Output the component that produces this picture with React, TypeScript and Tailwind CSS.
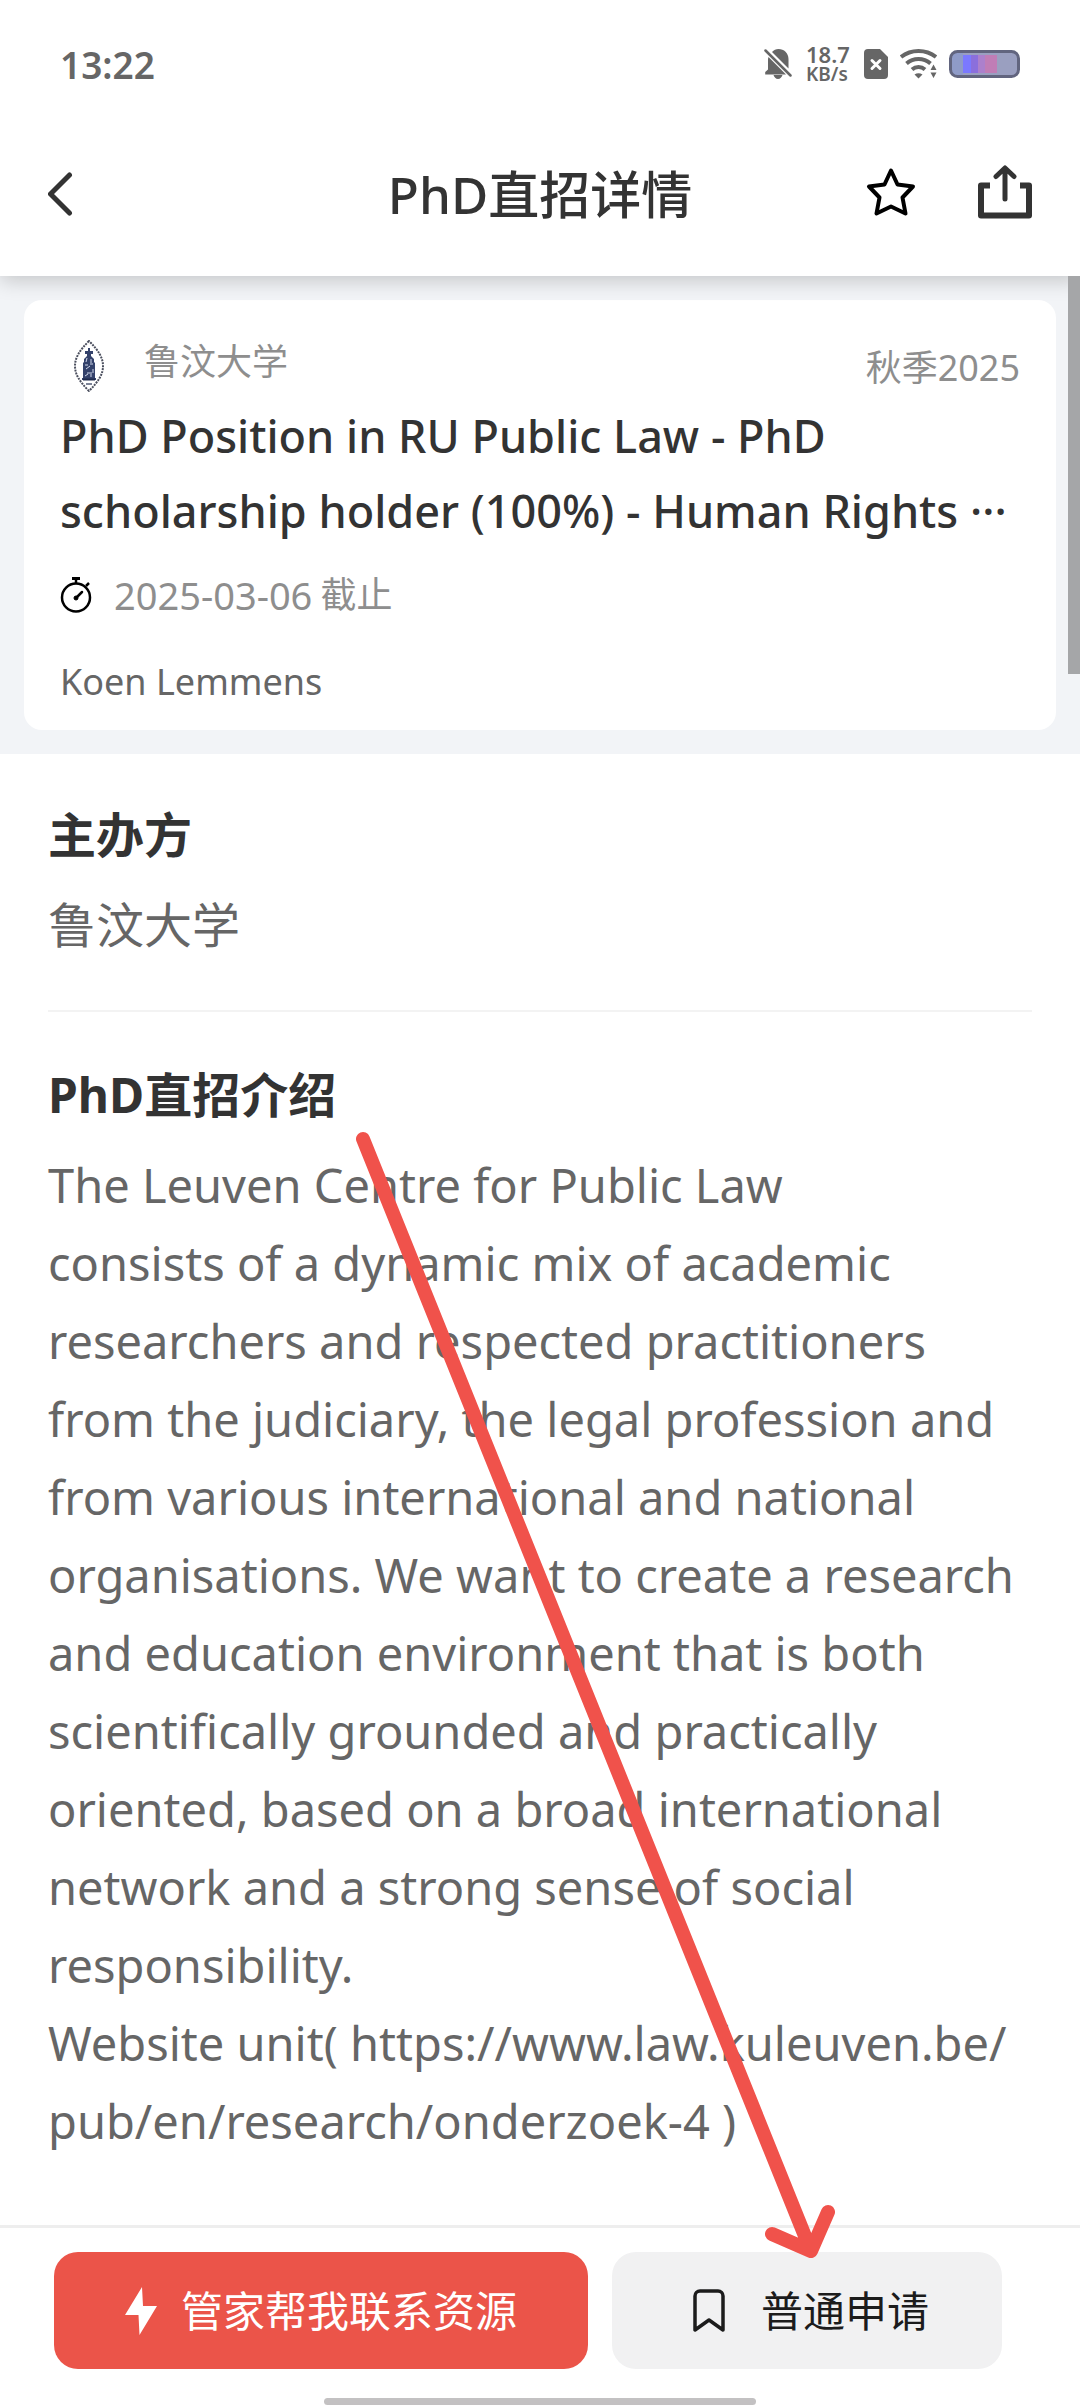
import type { ReactNode } from 'react';

const bodyLines = [
  'The Leuven Centre for Public Law',
  'consists of a dynamic mix of academic',
  'researchers and respected practitioners',
  'from the judiciary, the legal profession and',
  'from various international and national',
  'organisations. We want to create a research',
  'and education environment that is both',
  'scientifically grounded and practically',
  'oriented, based on a broad international',
  'network and a strong sense of social',
  'responsibility.',
];

function StatusBar() {
  return (
    <div className="flex h-32 items-center justify-between px-[60px] text-[#666]">
      <span className="text-[37px] leading-none font-semibold">13:22</span>
      <div className="flex items-center">
        {/* Muted bell */}
        <svg width="28" height="32" viewBox="0 0 28 32" className="mr-3.5" fill="currentColor">
          <path d="M8 4C9.800 2 12 1 14.500 1 20 1 24.500 5 24.500 11v9.500zM4.500 9 22 26.500H1.200v-2.500L4 21.500V11zM9.500 27h9c-.7 2.300-2.300 4-4.500 4s-3.800-1.700-4.500-4z" />
          <path d="M1.500 2.500 26.500 27.500" stroke="currentColor" strokeWidth="2.500" strokeLinecap="round" />
        </svg>
        <div className="mr-3.5 flex w-11 flex-col font-semibold">
          <span className="text-[22px] leading-[20px]">18.7</span>
          <span className="text-[19px] leading-[20px]">KB/s</span>
        </div>
        {/* SIM card */}
        <svg width="24" height="30" viewBox="0 0 24 30" className="mr-3">
          <path d="M4 0h12l8 8v18a4 4 0 0 1-4 4H4a4 4 0 0 1-4-4V4a4 4 0 0 1 4-4z" fill="currentColor" />
          <path d="m8 11.500 8 8m0-8-8 8" stroke="#fff" strokeWidth="3" strokeLinecap="round" />
        </svg>
        {/* Wifi */}
        <svg width="37" height="30" viewBox="0 0 37 30" className="mr-3" fill="none" stroke="currentColor" strokeWidth="4">
          <path d="M1 8C11 0 26 0 36 8M6.500 14.500C13.500 8.500 23.500 8.500 30.500 14.500M12 20.500c3.800-3.300 9.200-3.300 13 0" />
          <path d="M14.500 25.500c2.500-1.800 5.500-1.800 8 0l-4 4z" fill="currentColor" stroke="none" />
          <path d="m30.500 21 3-5.500 3 5.500zM30.500 23.500l3 5.500 3-5.500z" fill="currentColor" stroke="none" />
        </svg>
        {/* Battery */}
        <svg width="71" height="28" viewBox="0 0 71 28">
          <defs>
            <clipPath id="cell">
              <rect x="2" y="2" width="67" height="24" rx="6" />
            </clipPath>
          </defs>
          <g clipPath="url(#cell)">
            <rect width="71" height="28" fill="#9a9fc0" />
            <rect x="3" width="11" height="28" fill="#8f9bc8" />
            <rect x="14" y="5" width="8" height="18" fill="#7b79ff" />
            <rect x="22" y="5" width="7" height="18" fill="#8b6fdc" />
            <rect x="29" y="5" width="7" height="18" fill="#ac80cc" />
            <rect x="36" y="5" width="12" height="18" fill="#c07db6" />
          </g>
          <rect x="1.500" y="1.500" width="68" height="25" rx="7" fill="none" stroke="#62657f" strokeWidth="3" />
        </svg>
      </div>
    </div>
  );
}

function Header() {
  return (
    <header className="relative z-10 bg-white shadow-[0_4px_20px_rgba(0,0,0,0.2)]">
      <StatusBar />
      <div className="grid h-[148px] grid-cols-[1fr_auto_1fr] items-start px-12 pt-[34px]">
        <button aria-label="返回" className="flex h-16 w-16 items-center">
          <svg width="25" height="44" viewBox="0 0 25 44" fill="none" stroke="#333" strokeWidth="5" strokeLinecap="round">
            <path d="M21.500 3 2.500 22l19 19" />
          </svg>
        </button>
        <h1 className="text-[51px] leading-16 font-medium">PhD直招详情</h1>
        <div className="flex h-15 items-center justify-end gap-[62px]">
          <button aria-label="收藏">
            <svg width="50" height="50" viewBox="0 0 50 50" fill="none" stroke="#000" strokeWidth="4" strokeLinejoin="round">
              <path d="m25 3.500 6.500 14L47 19.500 36.500 30.500 39.500 46.500 25 39.500 10.500 46.500 13.500 30.500 3 19.500l15.500-2z" />
            </svg>
          </button>
          <button aria-label="分享">
            <svg width="54" height="54" viewBox="0 0 54 54" fill="none" stroke="#333">
              <path d="M12 20.500H3V50.500H51V20.500H42" strokeWidth="6" strokeLinejoin="round" />
              <path d="M27 5v29M18 11.500 27 3l9 8.500" strokeWidth="5" strokeLinecap="round" strokeLinejoin="round" />
            </svg>
          </button>
        </div>
      </div>
    </header>
  );
}

function UniversityCrest() {
  return (
    <svg width="30" height="52" viewBox="0 0 30 52" fill="none">
      <path d="M15 1C5 11 1 18 1 26s4 15 14 25c10-10 14-17 14-25S25 11 15 1z" stroke="#4b4f5e" strokeWidth="2" strokeDasharray="2 1" />
      <path d="M14 8h2v3h3v3h-2v2l3 3v3l1 1v15h1v2H8v-2h1V23l1-1v-3l3-3v-2h-2v-3h3z" fill="#34426b" />
      <path d="M13 18l-1 4m5-3v4m-6 2h3m2-1h3m-7 5 4-3m-3 7h5m-7 3 3-2m3 0v3m2-8v4" stroke="#cfd6ea" />
      <path d="M9 39.500h12" stroke="#1e2a4d" strokeWidth="2" />
      <path d="M12 44h6" stroke="#7b8296" strokeWidth="2" />
    </svg>
  );
}

function SummaryCard() {
  return (
    <section className="bg-[#f2f4f7] p-6">
      <div className="rounded-[18px] bg-white px-9 pt-8 pb-2 text-[36px] text-[#8e8e8e]">
        <div className="flex h-[66px] items-start justify-between">
          <div className="flex items-start pl-3.5">
            <span className="pt-2">
              <UniversityCrest />
            </span>
            <span className="pl-10 leading-[60px]">鲁汶大学</span>
          </div>
          <span className="leading-[72px]">秋季2025</span>
        </div>
        <h2 className="text-[45px] leading-[75px] font-medium text-[#333]">
          <span className="block">PhD Position in RU Public Law - PhD</span>
          <span className="block">scholarship holder (100%) - Human Rights ···</span>
        </h2>
        <div className="flex h-[94px] items-center">
          <svg width="32" height="36" viewBox="0 0 32 36" fill="none" stroke="#000">
            <circle cx="16" cy="20.500" r="14" strokeWidth="2.500" />
            <path d="M12 1.500h8" strokeWidth="3" />
            <path d="M16 1v5M26 9l3-3" strokeWidth="2.500" />
            <path d="m16 21 6-6" strokeWidth="2.500" strokeLinecap="round" />
            <circle cx="16" cy="21" r="2" fill="#000" />
          </svg>
          <span className="pl-[22px] text-[38px]">2025-03-06</span>
          <span className="pl-2">截止</span>
        </div>
        <p className="leading-[80px] text-[#666]">Koen Lemmens</p>
      </div>
    </section>
  );
}

function Section({ title, children }: { title: string; children: ReactNode }) {
  return (
    <section>
      <h3 className="text-[48px] leading-[90px] font-bold text-[#333]">{title}</h3>
      <div className="mt-1.5 leading-[78px] text-[#666]">{children}</div>
    </section>
  );
}

function BottomBar() {
  return (
    <footer className="border-t-3 border-[#eee] bg-white pt-6 text-[42px]">
      <div className="grid grid-cols-[534fr_390fr] gap-6 pr-[78px] pl-[54px]">
        <button className="flex h-[117px] items-center justify-center gap-6 rounded-3xl bg-[#eb5449] text-white">
          <svg width="32" height="48" viewBox="0 0 32 48" fill="currentColor">
            <path d="M17 0 0 28h13.500L14.500 48 32 19H18z" />
          </svg>
          管家帮我联系资源
        </button>
        <button className="flex h-[117px] items-center justify-center gap-9 rounded-3xl bg-[#f1f1f2] pl-2 text-[#1c1c1c]">
          <svg width="32" height="44" viewBox="0 0 32 44" fill="none" stroke="currentColor" strokeWidth="3.500" strokeLinejoin="round">
            <path d="M2 41V7a5 5 0 0 1 5-5h18a5 5 0 0 1 5 5v34L16 31z" />
          </svg>
          普通申请
        </button>
      </div>
      <div className="mx-auto mt-[29px] mb-[3px] h-[7px] w-2/5 rounded-full bg-[#c3c1c2]" />
    </footer>
  );
}

export default function App() {
  return (
    <div className="relative flex min-h-screen flex-col bg-white font-['Noto_Sans','Noto_Sans_CJK_SC',sans-serif] text-[#333]">
      <Header />
      <main className="relative flex-1">
        {/* Scroll thumb */}
        <div className="absolute top-0 right-0 z-20 h-[398px] w-3 bg-[#a5a6a8]" />
        <SummaryCard />
        <div className="px-12 pt-9">
          <Section title="主办方">
            <p className="text-[48px]">鲁汶大学</p>
          </Section>
          <hr className="mt-[46px] mb-[38px] border-t-2 border-[#f3f3f3]" />
          <Section title="PhD直招介绍">
            <p className="text-[47px]">
              {bodyLines.map((line) => (
                <span key={line} className="block">
                  {line}
                </span>
              ))}
            </p>
            <p className="text-[47px]">
              Website unit({' '}
              <a href="https://www.law.kuleuven.be/pub/en/research/onderzoek-4">
                https://www.law.kuleuven.be/
                <br />
                pub/en/research/onderzoek-4
              </a>{' '}
              )
            </p>
          </Section>
        </div>
      </main>
      <BottomBar />

      {/* Arrow pointing at the apply button */}
      <svg
        className="pointer-events-none absolute top-[1120px] left-[340px] z-30"
        width="510"
        height="1150"
        viewBox="340 1120 510 1150"
        fill="none"
        stroke="#f0524b"
        strokeWidth="14"
        strokeLinecap="round"
        strokeLinejoin="round"
      >
        <path d="M363 1139 811 2251M772 2234l39 17 17-39" />
      </svg>
    </div>
  );
}
